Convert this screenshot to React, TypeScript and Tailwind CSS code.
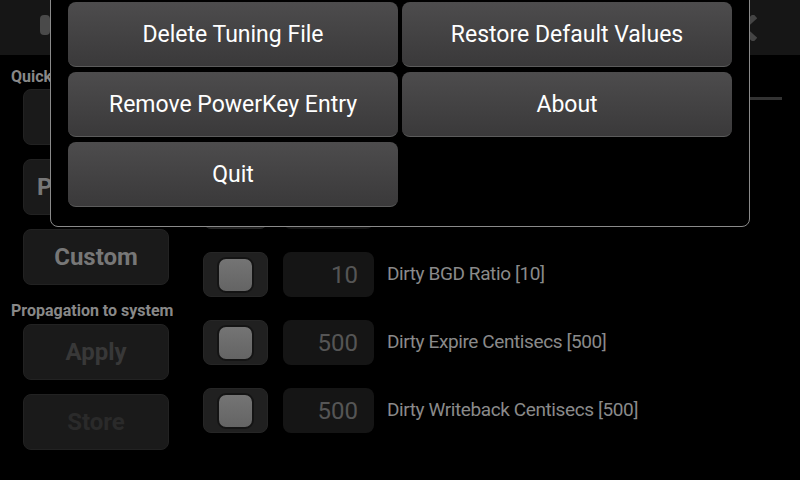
import React from "react";

const FONT = { fontFamily: "Roboto, 'Open Sans', sans-serif" };

const PRESETS = ["Default", "Powersave", "Custom"];

const ROWS = [
  { value: "60", label: "Swappiness [60]" },
  { value: "20", label: "Dirty Ratio [20]" },
  { value: "10", label: "Dirty BGD Ratio [10]" },
  { value: "500", label: "Dirty Expire Centisecs [500]" },
  { value: "500", label: "Dirty Writeback Centisecs [500]" },
];

const MENU = [
  "Delete Tuning File",
  "Restore Default Values",
  "Remove PowerKey Entry",
  "About",
  "Quit",
];

function SideButton({ label, tone }: { label: string; tone: string }) {
  return (
    <div
      className={`flex h-[56px] w-[146px] items-center justify-center rounded-lg border border-[#222] bg-[#1a1a1a] text-[24px] font-bold ${tone}`}
    >
      {label}
    </div>
  );
}

function Row({ value, label }: { value: string; label: string }) {
  return (
    <div className="flex h-[45px] items-center">
      <div className="flex h-[45px] w-[65px] items-center justify-center rounded-lg border border-[#262626] bg-[#202020]">
        <div className="h-[36px] w-[37px] rounded-[9px] border-2 border-[#141414] bg-gradient-to-b from-[#747474] to-[#646464]" />
      </div>
      <div className="ml-[15px] flex h-[45px] w-[91px] items-center justify-end rounded-lg bg-[#151515] pr-[16px] text-[24px] text-[#555]">
        {value}
      </div>
      <div className="ml-[13px] text-[19px] tracking-[-0.4px] text-[#8a8a8a]">{label}</div>
    </div>
  );
}

export default function App() {
  return (
    <div className="relative h-[480px] w-[800px] overflow-hidden bg-black" style={FONT}>
      {/* header */}
      <div className="relative flex h-[55px] items-center justify-between bg-[#161616] px-[40px]">
        <div className="flex h-[26px] w-[30px] items-start">
          <div className="h-[20px] w-[10px] rounded-sm bg-[#4a4a4a]" />
        </div>
        <svg width="30" height="26" viewBox="0 0 30 26" className="mr-[3px]">
          <path d="M4 3 L26 23 M26 3 L4 23" stroke="#444" strokeWidth="6" strokeLinecap="square" />
        </svg>
      </div>

      <div className="flex">
        {/* left column */}
        <div className="w-[203px] pl-[11px] pt-[12px]">
          <div className="h-[20px] text-[16px] font-bold leading-[20px] text-[#888]">Quick presets</div>
          <div className="ml-[12px] mt-[2px] flex flex-col gap-[14px]">
            {PRESETS.map((p) => (
              <SideButton key={p} label={p} tone="text-[#777]" />
            ))}
          </div>
          <div className="mb-[3px] mt-[16px] h-[20px] text-[16px] font-bold leading-[20px] text-[#888]">
            Propagation to system
          </div>
          <div className="ml-[12px] flex flex-col gap-[14px]">
            <SideButton label="Apply" tone="text-[#383838]" />
            <SideButton label="Store" tone="text-[#2a2a2a]" />
          </div>
        </div>

        {/* right column */}
        <div className="flex-1 pr-[18px]">
          <div className="mt-[42px] h-[3px] bg-[#333]" />
          <div className="mt-[16px] flex flex-col gap-[23px]">
            {ROWS.map((r) => (
              <Row key={r.label} value={r.value} label={r.label} />
            ))}
          </div>
        </div>
      </div>

      {/* options menu */}
      <div className="absolute left-[50px] top-[-16px] w-[700px] rounded-b-lg border border-[#8a8a8a] bg-black px-[17px] pb-[19px] pt-[17px]">
        <div className="grid grid-cols-2 gap-x-[4px] gap-y-[5px]">
          {MENU.map((m) => (
            <div
              key={m}
              className="flex h-[65px] items-center justify-center rounded-lg border-b border-[#5c5c5c] bg-gradient-to-b from-[#4d4c4d] to-[#3a393a] pt-[3px] text-[23px] text-white"
            >
              {m}
            </div>
          ))}
        </div>
      </div>
    </div>
  );
}
